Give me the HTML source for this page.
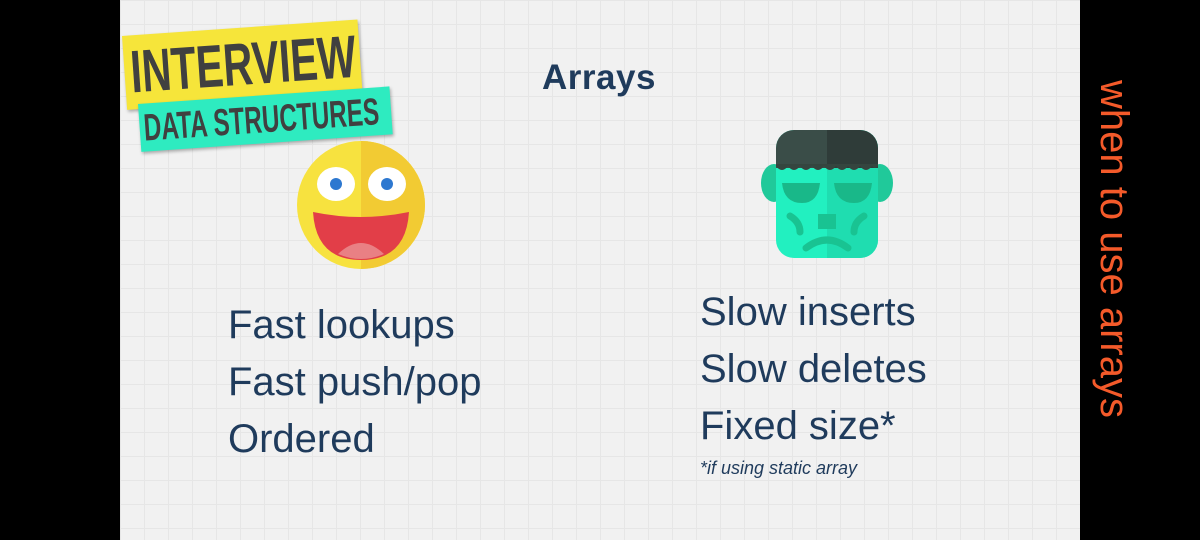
<!DOCTYPE html>
<html><head><meta charset="utf-8"><style>
body{margin:0;width:1200px;height:540px;background:#000;position:relative;overflow:hidden;font-family:"Liberation Sans",sans-serif}
.slide{position:absolute;left:120px;top:0;width:960px;height:540px;background-color:#f1f1f1;
background-image:linear-gradient(#e6e6e6 1px,transparent 1px),linear-gradient(90deg,#e6e6e6 1px,transparent 1px);background-size:24px 24px}
.t{position:absolute;color:#1f3b5c;font-size:40px;line-height:57px;white-space:nowrap}
.title{position:absolute;left:542px;top:58px;font-size:35px;font-weight:bold;color:#1f3b5c;letter-spacing:0.5px}
.side{position:absolute;left:1096px;top:80px;transform-origin:0 0;transform:translate(40px,0) rotate(90deg);color:#f45a2a;font-size:40px;white-space:nowrap}
.b1{position:absolute;left:122px;top:36px;width:236px;height:74px;background:#f6e53a;transform:rotate(-4deg);transform-origin:0 0;box-shadow:1px 2px 3px rgba(0,0,0,.3);overflow:hidden}
.b1 span{position:absolute;left:6px;top:2px;display:block;font-weight:bold;font-size:60px;color:#404040;line-height:70px;transform:scaleX(0.68);transform-origin:0 0;white-space:nowrap}
.b2{position:absolute;left:138px;top:104px;width:252px;height:48px;background:#2eebc0;transform:rotate(-4deg);transform-origin:0 0;box-shadow:1px 2px 3px rgba(0,0,0,.3);overflow:hidden}
.b2 span{position:absolute;left:4px;top:2px;display:block;font-weight:bold;font-size:38px;color:#404040;line-height:46px;transform:scaleX(0.64);transform-origin:0 0;white-space:nowrap}
</style></head><body>
<div class="slide"></div>
<div class="b1"><span>INTERVIEW</span></div>
<div class="b2"><span>DATA STRUCTURES</span></div>
<div class="title">Arrays</div>
<svg style="position:absolute;left:296px;top:140px" width="132" height="132" viewBox="0 0 132 132">
<defs><clipPath id="c"><circle cx="65" cy="65" r="64"/></clipPath></defs>
<circle cx="65" cy="65" r="64" fill="#f7e23f"/>
<rect x="65" y="0" width="70" height="132" fill="#f2cb33" clip-path="url(#c)"/>
<ellipse cx="40" cy="44" rx="19" ry="17" fill="#fff"/><circle cx="40" cy="44" r="6" fill="#2d78d0"/>
<ellipse cx="91" cy="44" rx="19" ry="17" fill="#fff"/><circle cx="91" cy="44" r="6" fill="#2d78d0"/>
<path d="M17 72 Q65 82 113 72 Q110 120 65 120 Q20 120 17 72Z" fill="#e23e48"/>
<path d="M42 114 Q65 92 88 114 Q65 124 42 114Z" fill="#e98084"/>
</svg>
<svg style="position:absolute;left:760px;top:128px" width="134" height="132" viewBox="0 0 134 132">
<defs><clipPath id="h"><rect x="16" y="2" width="102" height="128" rx="18"/></clipPath></defs>
<ellipse cx="14" cy="55" rx="13" ry="19" fill="#20c99a"/><ellipse cx="120" cy="55" rx="13" ry="19" fill="#20c99a"/>
<g clip-path="url(#h)">
<rect x="16" y="2" width="102" height="128" fill="#22f0c0"/>
<rect x="67" y="2" width="51" height="128" fill="#1fddb0"/>
<rect x="16" y="2" width="51" height="38" fill="#3a4d48"/>
<rect x="67" y="2" width="51" height="38" fill="#2f3c39"/>
<path d="M16 38 q6 8 12 0 q6 8 12 0 q6 8 12 0 q6 8 12 0 q6 8 12 0 q6 8 12 0 q6 8 12 0 q6 8 12 0 q3 4 6 0 V36 H16Z" fill="#35453f"/>
<path d="M22 55 H60 Q58 75 42 75 Q24 75 22 55Z" fill="#19b889"/>
<path d="M74 55 H112 Q110 75 94 75 Q76 75 74 55Z" fill="#19b889"/>
<rect x="58" y="86" width="18" height="15" fill="#19c392"/>
<path d="M46 120 Q67 104 88 120" stroke="#19c392" stroke-width="7" fill="none" stroke-linecap="round"/>
<path d="M30 88 Q40 94 40 104" stroke="#19c392" stroke-width="7" fill="none" stroke-linecap="round"/>
<path d="M104 88 Q94 94 94 104" stroke="#19c392" stroke-width="7" fill="none" stroke-linecap="round"/>
</g>
</svg>
<div class="t" style="left:228px;top:297px">Fast lookups<br>Fast push/pop<br>Ordered</div>
<div class="t" style="left:700px;top:284px">Slow inserts<br>Slow deletes<br>Fixed size*</div>
<div style="position:absolute;left:700px;top:458px;font-size:18px;font-style:italic;color:#1f3b5c">*if using static array</div>
<div class="side">when to use arrays</div>
</body></html>
